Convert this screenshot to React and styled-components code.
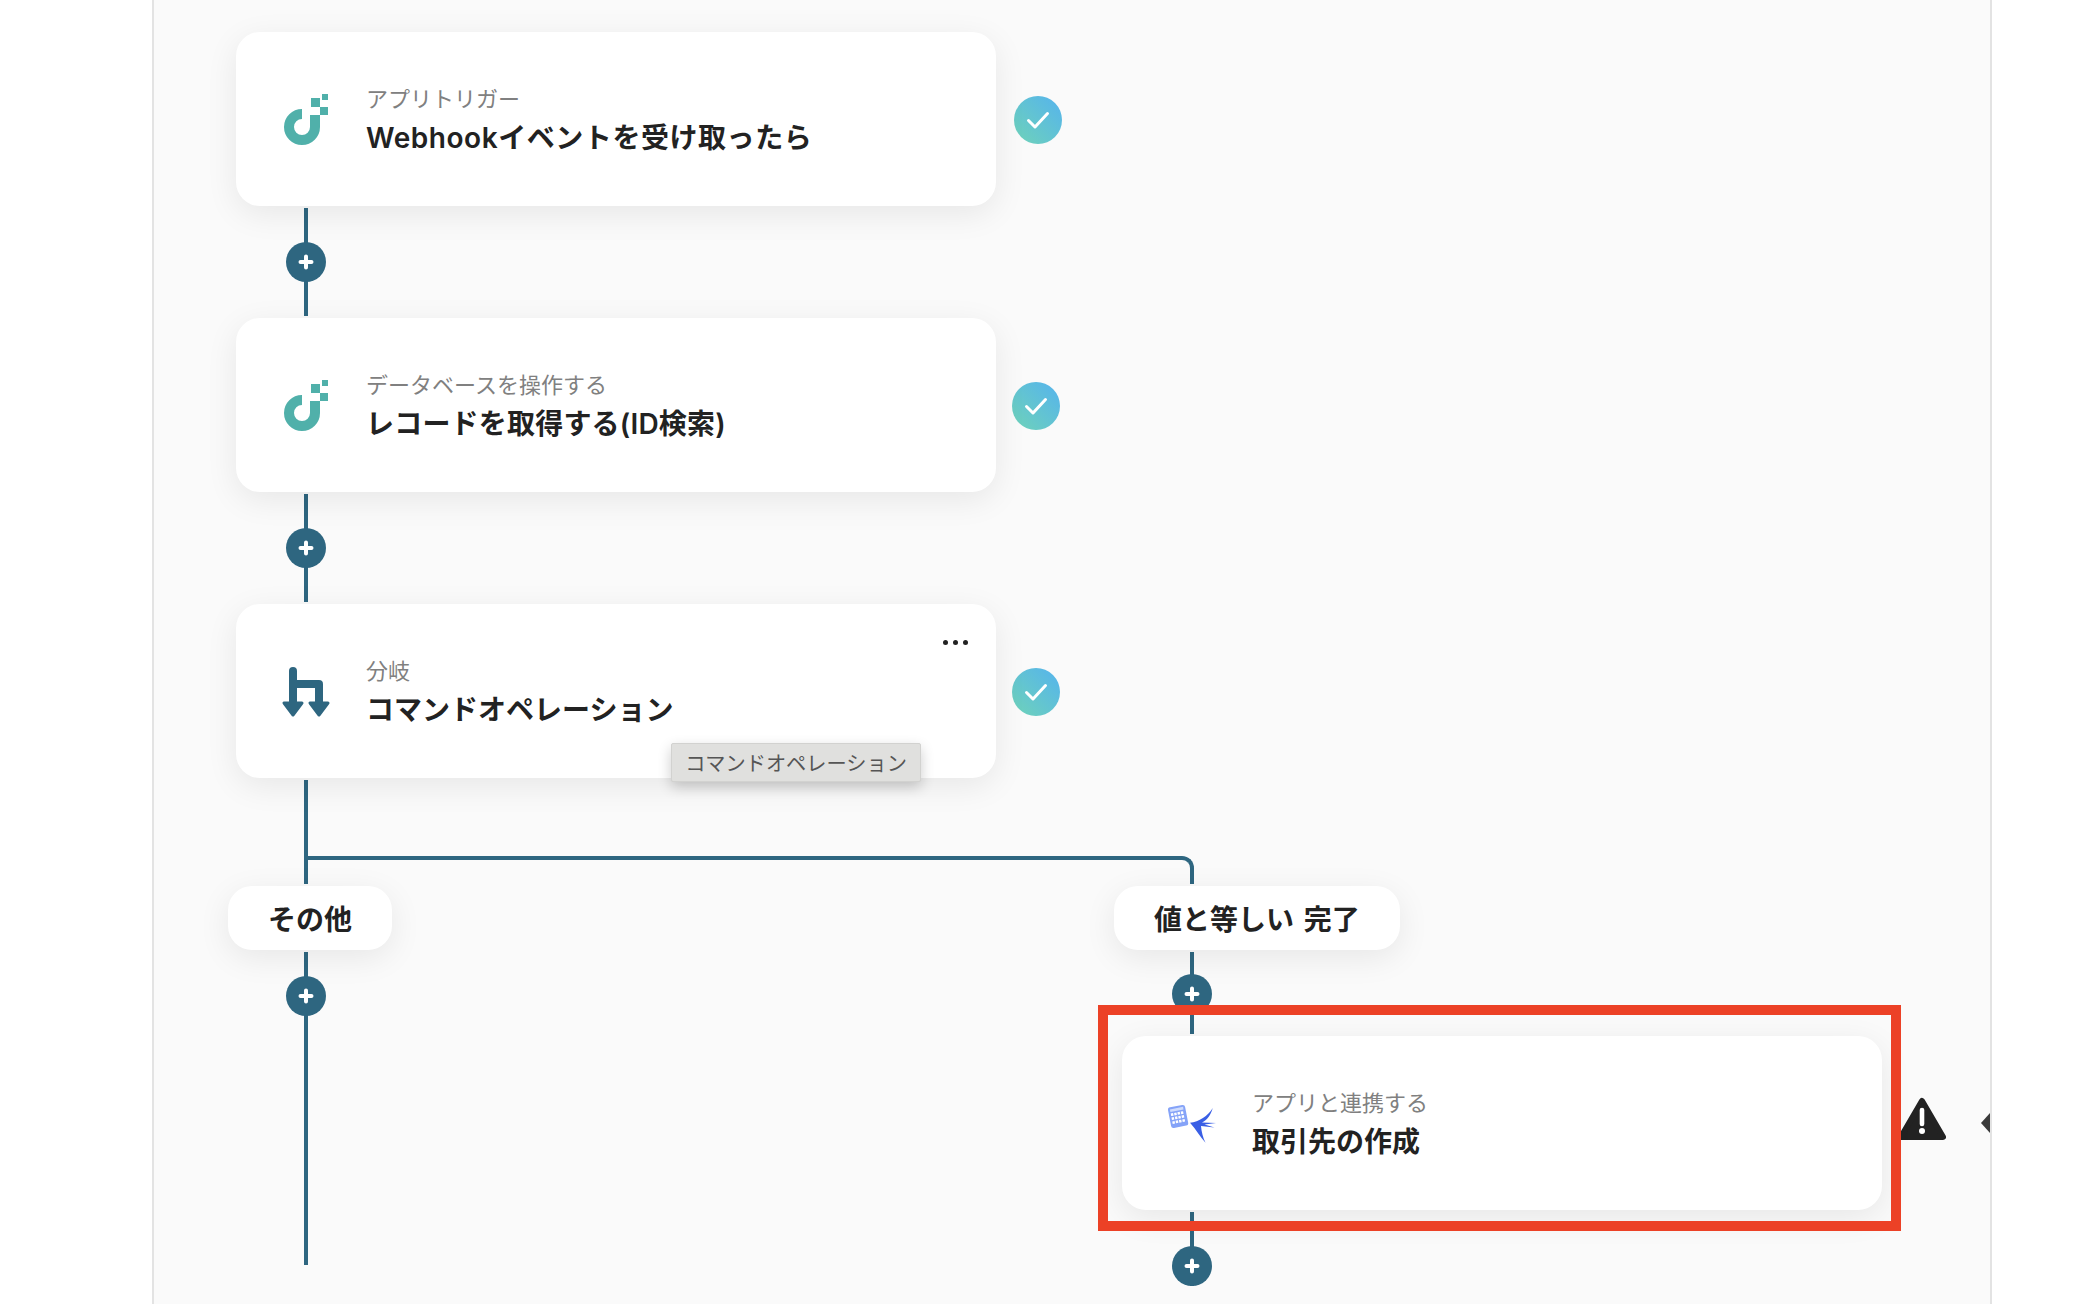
import React from 'react';
import styled, {createGlobalStyle} from "styled-components";

const LINE = '#2e6680';

const GlobalStyle = createGlobalStyle`
  html, body {
    margin: 0;
    padding: 0;
    background: #ffffff;
    font-family: "Liberation Sans", "Noto Sans CJK JP", sans-serif;
  }
`

function PlusButton() {
    return (
        <Plus>
            <svg width="16" height="16" viewBox="0 0 16 16">
                <path d="M8 2.5v11M2.5 8h11" stroke="#fff" strokeWidth="4" strokeLinecap="round" fill="none"/>
            </svg>
        </Plus>
    );
}

function YoomIcon() {
    return (
        <IconBox viewBox="0 0 52 56">
            <g fill="#50b0aa">
                <rect x="42" y="3" width="6" height="6"/>
                <rect x="31" y="7" width="9" height="9"/>
                <rect x="40" y="16" width="8" height="8"/>
            </g>
            <path d="M22 23A13 13 0 1 0 35 36V24" fill="none" stroke="#50b0aa" strokeWidth="10"/>
        </IconBox>
    );
}

function BranchIcon() {
    return (
        <IconBox viewBox="0 0 52 56">
            <path d="M13 8v32M13 21h26v19" fill="none" stroke={LINE} strokeWidth="8" strokeLinecap="round" strokeLinejoin="round"/>
            <path d="M4 40h18L13 52zM30 40h18L39 52z" fill={LINE} stroke={LINE} strokeWidth="3" strokeLinejoin="round"/>
        </IconBox>
    );
}

function FreeeIcon() {
    const keys = [];
    for (let r = 0; r < 3; r++) {
        for (let c = 0; c < 4; c++) {
            keys.push(<rect key={r + '-' + c} x={5.4 + c * 3.4} y={17.2 + r * 4} width="2.4" height="2.6" fill="#fff"/>);
        }
    }
    return (
        <IconBox viewBox="0 0 52 56">
            <g transform="rotate(-11 12 21.5)">
                <rect x="3.4" y="11" width="17.4" height="21" rx="2.5" fill="#85a3f8"/>
                <rect x="5.4" y="13" width="13.4" height="2.6" fill="#cfdcfd"/>
                {keys}
            </g>
            <path d="M24 27.7C33 27 42 21 46.7 13C45 20 41 25 36 27.5L50 28L38.5 29.5L48.5 32.5L35 31C35.5 37 37 43 39.5 47.7C34 42 30 34 24 27.7Z" fill="#3a5fe5"/>
        </IconBox>
    );
}

function Step({icon, label, title, tracking, menu, tooltip}) {
    return (
        <Card>
            {icon}
            <CardText>
                <CardLabel>{label}</CardLabel>
                <CardTitle $tracking={tracking}>{title}</CardTitle>
            </CardText>
            {menu && <Dots><i/><i/><i/></Dots>}
            {tooltip && <Tooltip>{tooltip}</Tooltip>}
        </Card>
    );
}

function Done({$gap}) {
    return (
        <Check $gap={$gap}>
            <svg width="24" height="24" viewBox="0 0 24 24">
                <path d="M2.5 12.5l6.5 6.5L21.5 5.5" fill="none" stroke="#fff" strokeWidth="3" strokeLinecap="round" strokeLinejoin="round"/>
            </svg>
        </Check>
    );
}

export default function App() {
    return (
        <>
            <GlobalStyle/>
            <Page>
                <Panel>
                    <StepRow>
                        <Step icon={<YoomIcon/>} label="アプリトリガー" title="Webhookイベントを受け取ったら" tracking={0.55}/>
                        <Done $gap={18}/>
                    </StepRow>
                    <Connector $height={108} $plusTop={34}><PlusButton/></Connector>
                    <StepRow>
                        <Step icon={<YoomIcon/>} label="データベースを操作する" title="レコードを取得する(ID検索)" tracking={0.2}/>
                        <Done $gap={16}/>
                    </StepRow>
                    <Connector $height={108} $plusTop={34}><PlusButton/></Connector>
                    <StepRow>
                        <Step
                            icon={<BranchIcon/>}
                            label="分岐"
                            title="コマンドオペレーション"
                            menu
                            tooltip="コマンドオペレーション"
                        />
                        <Done $gap={16}/>
                    </StepRow>
                    <Stem/>
                    <Rail/>
                    <Lanes>
                        <LeftLane>
                            <Pill>その他</Pill>
                            <Connector $height={313} $plusTop={24} $left={76}><PlusButton/></Connector>
                        </LeftLane>
                        <RightLane>
                            <Pill>値と等しい 完了</Pill>
                            <Connector $height={82} $plusTop={22} $left={76}><PlusButton/></Connector>
                            <RightStepRow>
                                <Step icon={<FreeeIcon/>} label="アプリと連携する" title="取引先の作成"/>
                                <Warning viewBox="0 0 48 44">
                                    <path d="M24 4L45 40H3Z" fill="#222" stroke="#222" strokeWidth="6" strokeLinejoin="round"/>
                                    <path d="M24 13v14" stroke="#fff" strokeWidth="4.6" strokeLinecap="round"/>
                                    <circle cx="24" cy="34" r="3" fill="#fff"/>
                                </Warning>
                            </RightStepRow>
                            <Connector $height={74} $plusTop={34} $left={76}><PlusButton/></Connector>
                            <Highlight/>
                        </RightLane>
                    </Lanes>
                    <CollapseHandle/>
                </Panel>
            </Page>
        </>
    );
}

const Page = styled.div`
  width: 2080px;
  height: 1304px;
  overflow: hidden;
  background: #ffffff;
`

const Panel = styled.div`
  position: relative;
  box-sizing: border-box;
  width: 1840px;
  height: 1304px;
  margin-left: 152px;
  padding: 32px 0 0 82px;
  background: #fafafa;
  border-left: 2px solid #e3e3e3;
  border-right: 2px solid #e3e3e3;
  overflow: hidden;
`

const StepRow = styled.div`
  display: flex;
  align-items: center;
`

const RightStepRow = styled(StepRow)`
  margin: 2px 0 0 8px;
`

const Card = styled.div`
  position: relative;
  box-sizing: border-box;
  display: flex;
  align-items: center;
  flex: none;
  width: 760px;
  height: 174px;
  padding-left: 44px;
  background: #ffffff;
  border-radius: 24px;
  box-shadow: 0 8px 32px rgba(0, 0, 0, 0.08);
`

const IconBox = styled.svg`
  flex: none;
  width: 52px;
  height: 56px;
  margin-right: 34px;
`

const CardText = styled.div`
  display: flex;
  flex-direction: column;
  gap: 3px;
  padding-top: 5px;
`

const CardLabel = styled.div`
  font-size: 22px;
  line-height: 30px;
  color: #808080;
  white-space: nowrap;
`

const CardTitle = styled.div`
  font-family: Inter, "Noto Sans CJK JP", sans-serif;
  font-size: 28px;
  line-height: 40px;
  font-weight: 600;
  letter-spacing: ${props => props.$tracking ?? 0}px;
  color: #222222;
  white-space: nowrap;
`

const Dots = styled.div`
  position: absolute;
  top: 36px;
  right: 28px;
  display: flex;
  gap: 5px;

  i {
    display: block;
    width: 5px;
    height: 5px;
    border-radius: 50%;
    background: #222222;
  }
`

const Tooltip = styled.div`
  position: absolute;
  left: 435px;
  top: 139px;
  box-sizing: border-box;
  width: 250px;
  height: 39px;
  display: flex;
  align-items: center;
  justify-content: center;
  font-size: 20.2px;
  color: #555555;
  background: #e0e0de;
  border: 1px solid #d2d2d0;
  border-radius: 2px;
  box-shadow: 0 5px 14px rgba(0, 0, 0, 0.2);
  white-space: nowrap;
`

const Check = styled.div`
  flex: none;
  display: flex;
  align-items: center;
  justify-content: center;
  width: 48px;
  height: 48px;
  margin: 2px 0 0 ${props => props.$gap}px;
  border-radius: 50%;
  background: linear-gradient(45deg, #6fd3b8, #55b3ee);
`

const Connector = styled.div`
  display: flex;
  justify-content: center;
  align-items: flex-start;
  box-sizing: border-box;
  width: 4px;
  height: ${props => props.$height}px;
  margin: 2px 0 2px ${props => props.$left ?? 68}px;
  padding-top: ${props => props.$plusTop}px;
  background: ${LINE};
`

const Plus = styled.div`
  flex: none;
  display: flex;
  align-items: center;
  justify-content: center;
  width: 40px;
  height: 40px;
  border-radius: 50%;
  background: ${LINE};
`

const Stem = styled.div`
  width: 4px;
  height: 76px;
  margin: 2px 0 0 68px;
  background: ${LINE};
`

const Rail = styled.div`
  box-sizing: border-box;
  width: 890px;
  height: 28px;
  margin-left: 68px;
  border: 4px solid ${LINE};
  border-bottom: 0;
  border-top-right-radius: 12px;
`

const Lanes = styled.div`
  display: flex;
  margin: 2px 0 0 -8px;
`

const LeftLane = styled.div`
  flex: none;
  width: 886px;
`

const RightLane = styled.div`
  position: relative;
  flex: none;
`

const Pill = styled.div`
  display: inline-block;
  height: 64px;
  padding: 0 40px;
  font-size: 28px;
  line-height: 70px;
  font-weight: 700;
  word-spacing: 2px;
  color: #222222;
  background: #ffffff;
  border-radius: 24px;
  box-shadow: 0 8px 32px rgba(0, 0, 0, 0.08);
  white-space: pre;
  vertical-align: top;
`

const Warning = styled.svg`
  flex: none;
  width: 48px;
  height: 44px;
  margin: 0 0 8px 16px;
`

const Highlight = styled.div`
  position: absolute;
  left: -16px;
  top: 119px;
  box-sizing: border-box;
  width: 803px;
  height: 226px;
  border: 10px solid #ec4126;
`

const CollapseHandle = styled.div`
  position: absolute;
  right: 0;
  top: 1113px;
  width: 0;
  height: 0;
  border-top: 10px solid transparent;
  border-bottom: 10px solid transparent;
  border-right: 9px solid #3a3a3a;
`
